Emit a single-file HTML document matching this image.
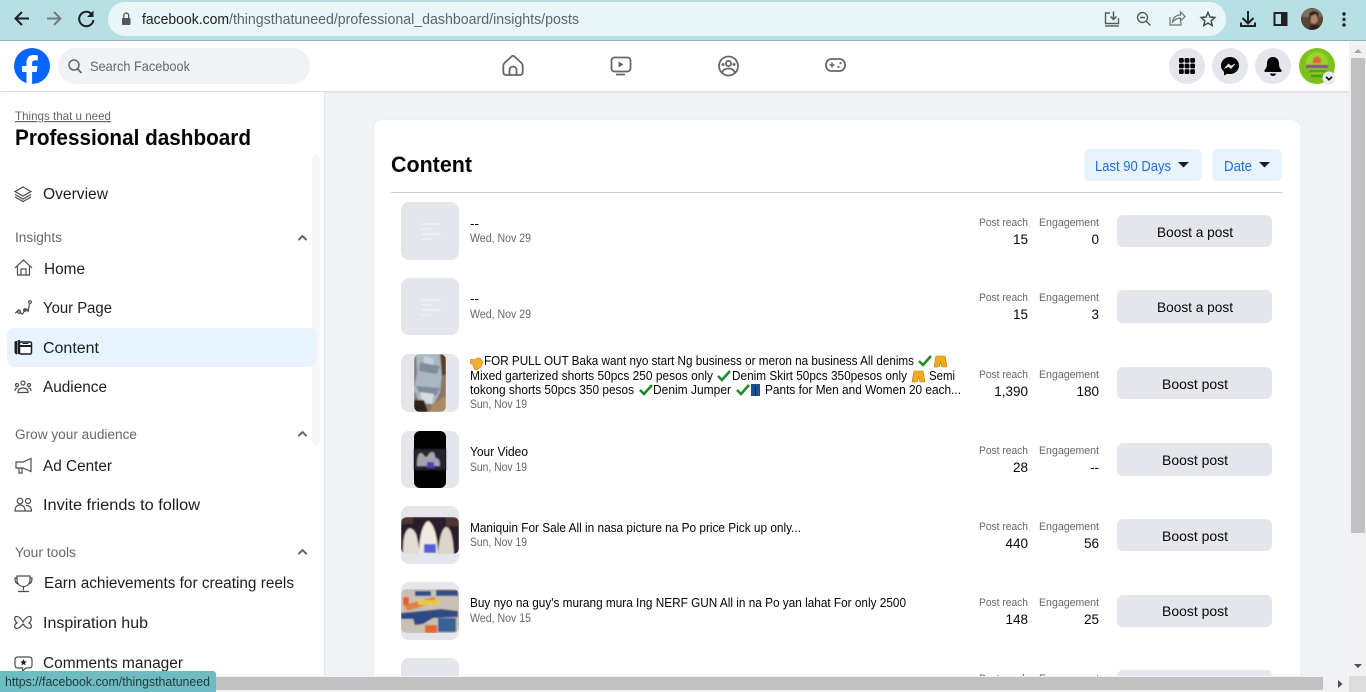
<!DOCTYPE html>
<html lang="en"><head><meta charset="utf-8"><title>Professional dashboard</title>
<style>
html,body{margin:0;padding:0;width:1366px;height:692px;overflow:hidden;background:#f0f2f5;font-family:"Liberation Sans",sans-serif}
#root{position:relative;width:1366px;height:692px;overflow:hidden;background:#f0f2f5}
.b{position:absolute;box-sizing:border-box}
svg{position:absolute;left:0;top:0}
text{font-family:"Liberation Sans",sans-serif}
.nav{font-size:15.5px;fill:#1c1e21}
.sec{font-size:13.5px;fill:#65676b}
.tt{font-size:12.5px;fill:#050505}
.dt{font-size:11.5px;fill:#65676b}
.lb{font-size:11px;fill:#65676b}
.val{font-size:13.5px;fill:#050505}
.btn{font-size:14px;fill:#050505}
.ic{fill:none;stroke:#4b4c4f;stroke-width:1.2}
.ni{fill:none;stroke:#65676b;stroke-width:1.8}
.ch{fill:none;stroke:#606770;stroke-width:2;stroke-linecap:round;stroke-linejoin:round}
</style></head><body><div id="root">
<div class="b" style="left:0;top:0;width:1366px;height:41px;background:#b8e0e4;border-bottom:1px solid #8fb8bc"></div>
<div class="b" style="left:108px;top:2px;width:1118px;height:34px;background:#e9f6f7;border-radius:17px"></div>
<div class="b" style="left:0;top:41px;width:1349px;height:50px;background:#fff;box-shadow:0 1px 2px rgba(0,0,0,.12)"></div>
<div class="b" style="left:58px;top:48px;width:252px;height:36px;background:#f0f2f5;border-radius:18px"></div>
<div class="b" style="left:0;top:92px;width:325px;height:600px;background:#fff;border-right:1px solid #e6e7ea"></div>
<div class="b" style="left:312px;top:155px;width:8px;height:290px;background:#f7f7f8;border-radius:4px"></div>
<div class="b" style="left:7px;top:328px;width:310px;height:39px;background:#e7f3ff;border-radius:8px"></div>
<div class="b" style="left:374px;top:120px;width:926px;height:572px;background:#fff;border-radius:8px;box-shadow:0 0 1px rgba(0,0,0,.12)"></div>
<div class="b" style="left:1084px;top:149px;width:118px;height:32px;background:#e7f3ff;border-radius:6px"></div>
<div class="b" style="left:1212px;top:149px;width:70px;height:32px;background:#e7f3ff;border-radius:6px"></div>
<div class="b" style="left:391px;top:192px;width:891px;height:1px;background:#ced0d4"></div>
<div class="b" style="left:1117px;top:215px;width:155px;height:32px;background:#e4e6eb;border-radius:6px"></div>
<div class="b" style="left:1117px;top:290px;width:155px;height:33px;background:#e4e6eb;border-radius:6px"></div>
<div class="b" style="left:1117px;top:367px;width:155px;height:32px;background:#e4e6eb;border-radius:6px"></div>
<div class="b" style="left:1117px;top:443px;width:155px;height:33px;background:#e4e6eb;border-radius:6px"></div>
<div class="b" style="left:1117px;top:519px;width:155px;height:32px;background:#e4e6eb;border-radius:6px"></div>
<div class="b" style="left:1117px;top:595px;width:155px;height:32px;background:#e4e6eb;border-radius:6px"></div>
<div class="b" style="left:1117px;top:670px;width:155px;height:22px;background:#e4e6eb;border-radius:6px 6px 0 0"></div>
<div class="b" style="left:401px;top:202px;width:58px;height:58px;background:#e4e6eb;border-radius:8px"></div>
<div class="b" style="left:401px;top:278px;width:58px;height:57px;background:#e4e6eb;border-radius:8px"></div>
<div class="b" style="left:401px;top:354px;width:58px;height:58px;background:#e4e6eb;border-radius:8px"></div>
<div class="b" style="left:401px;top:431px;width:58px;height:57px;background:#e4e6eb;border-radius:8px"></div>
<div class="b" style="left:401px;top:506px;width:58px;height:58px;background:#e4e6eb;border-radius:8px"></div>
<div class="b" style="left:401px;top:582px;width:58px;height:58px;background:#e4e6eb;border-radius:8px"></div>
<div class="b" style="left:401px;top:658px;width:58px;height:34px;background:#e4e6eb;border-radius:8px 8px 0 0"></div>

<svg width="1366" height="692" viewBox="0 0 1366 692">
<defs>
<clipPath id="c3"><rect x="414" y="354" width="32" height="58" rx="6"/></clipPath>
<clipPath id="c5"><rect x="401" y="517" width="58" height="37" rx="6"/></clipPath>
<clipPath id="c6"><rect x="401" y="589" width="58" height="44" rx="6"/></clipPath>
<clipPath id="cf"><circle cx="32" cy="66" r="18"/></clipPath>
<clipPath id="cp"><circle cx="1312" cy="19" r="11"/></clipPath>
<clipPath id="clipRow"><rect x="970" y="660" width="140" height="16"/></clipPath>
<filter id="bl1"><feGaussianBlur stdDeviation="0.7"/></filter>
<g id="bl"><path d="M421 0h20M421 5h10M421 10h20M421 15h10" stroke="#f2f3f5" stroke-width="1.2" fill="none"/></g>
<g id="chk"><path d="M1 6l4 4 8-9" fill="none" stroke="#1f8a2b" stroke-width="2.6"/></g>
<g id="sh"><path d="M2 1h9l2 11H8L6.500 7 5 12H0z" fill="#f0ac18" stroke="#b47a0c" stroke-width=".6"/></g>
</defs>

<!-- chrome toolbar -->
<path d="M29 18.500H16M22 12l-6.500 6.500L22 25" fill="none" stroke="#202124" stroke-width="2"/>
<path d="M47 18.500h13M54 12l6.500 6.500L54 25" fill="none" stroke="#757c7e" stroke-width="2"/>
<path d="M92 14.500A7.200 7.200 0 1 0 93.500 20" fill="none" stroke="#202124" stroke-width="2"/><path d="M93.500 10.500v6.500H87z" fill="#202124"/>
<rect x="122" y="18" width="8.500" height="7" rx="1" fill="#55595c"/><path d="M123.800 18v-2.500a2.450 2.450 0 0 1 4.900 0V18" fill="none" stroke="#55595c" stroke-width="1.300"/>
<text x="142" y="24" font-size="14.500" fill="#202124" textLength="87" lengthAdjust="spacingAndGlyphs">facebook.com</text>
<text x="229" y="24" font-size="14.500" fill="#5b6567" textLength="350" lengthAdjust="spacingAndGlyphs">/thingsthatuneed/professional_dashboard/insights/posts</text>
<path d="M1110 13h-4.500v10.500h13V18" fill="none" stroke="#55595c" stroke-width="1.400"/><path d="M1105 26h14" stroke="#55595c" stroke-width="1.400"/><path d="M1113.500 11.500v8M1110.500 16.500l3 3 3-3" fill="none" stroke="#55595c" stroke-width="1.500"/>
<circle cx="1142.500" cy="17.500" r="5" fill="none" stroke="#55595c" stroke-width="1.400"/><path d="M1146 21l4.500 4.500M1140 17.500h5" stroke="#55595c" stroke-width="1.400"/>
<path d="M1170 17v8h11v-3M1172.500 22c.5-4 3.500-7 8-7v-3l4.500 4.500-4.500 4.500v-3c-3 0-5.500 1.500-8 4z" fill="none" stroke="#6b7173" stroke-width="1.200"/>
<path d="M1208 12.500l2 4.500 4.800.5-3.600 3.200 1 4.800-4.200-2.500-4.200 2.500 1-4.800-3.600-3.200 4.800-.5z" fill="none" stroke="#45494b" stroke-width="1.500"/>
<path d="M1248 11v12M1242.500 18l5.500 5.500 5.500-5.500" fill="none" stroke="#202124" stroke-width="2"/><path d="M1241 22.500v3.500h14v-3.500" fill="none" stroke="#202124" stroke-width="2"/>
<rect x="1274.500" y="13" width="12" height="12" fill="none" stroke="#202124" stroke-width="2"/><rect x="1281" y="12" width="6.500" height="14" fill="#202124"/>
<circle cx="1312" cy="19" r="11" fill="#5a4436"/><g clip-path="url(#cp)" filter="url(#bl1)"><path d="M1302 9h20v8h-20z" fill="#7c7360"/><ellipse cx="1314" cy="19" rx="4" ry="5" fill="#b7846a"/><path d="M1309 30c0-5 3-6 6-6s5 2 5 6z" fill="#2d2320"/><path d="M1309 14c2-4 8-4 10 0l-1 5-2-5-5 2-1 9z" fill="#2c1f1b"/></g>
<circle cx="1344" cy="14" r="1.700" fill="#202124"/><circle cx="1344" cy="19.500" r="1.700" fill="#202124"/><circle cx="1344" cy="25" r="1.700" fill="#202124"/>

<!-- FB header -->
<circle cx="32" cy="66" r="18" fill="#0866ff"/>
<g clip-path="url(#cf)"><path d="M26.500 84.500V72h-4.500v-6h4.500v-3.500c0-5 3-7.500 7-7.500 1.500 0 3 .2 4.300.4v5h-2.600c-2.400 0-3.100 1.200-3.100 3V66h5.500l-.9 6h-4.600v12.500z" fill="#fff"/></g>
<circle cx="74" cy="65" r="5" fill="none" stroke="#65676b" stroke-width="1.500"/><path d="M77.500 69l4 4" stroke="#65676b" stroke-width="1.700"/>
<text x="90" y="71" font-size="14" fill="#65676b" textLength="100" lengthAdjust="spacingAndGlyphs">Search Facebook</text>
<path d="M505 62.500l6.500-6c.9-.8 2.100-.8 3 0l6.500 6c1.200 1.100 1.700 2 1.700 3.500v6c0 1.900-1.100 3-3 3h-13.400c-1.900 0-3-1.100-3-3v-6c0-1.500.5-2.400 1.700-3.500z" class="ni"/><path d="M509.500 75v-5a3.500 3.500 0 0 1 7 0v5" class="ni"/>
<rect x="611.500" y="57.500" width="19" height="14" rx="3" class="ni"/><path d="M618.500 61.500l5 3-5 3z" fill="#65676b"/><path d="M616 74.500h9" class="ni"/>
<circle cx="728.500" cy="66" r="9.500" class="ni"/><circle cx="728.500" cy="63.500" r="2.600" class="ni"/><path d="M722 73c.8-3 3-4.500 6.500-4.500s5.700 1.500 6.500 4.500" class="ni"/><circle cx="723" cy="64.500" r="1.500" fill="#65676b"/><circle cx="734" cy="64.500" r="1.500" fill="#65676b"/>
<rect x="826" y="59" width="19" height="12" rx="5.500" class="ni"/><path d="M829.500 65h5M832 62.500v5" stroke="#65676b" stroke-width="1.600"/><circle cx="840.500" cy="63" r="1.100" fill="#65676b"/><circle cx="838.500" cy="67" r="1.100" fill="#65676b"/>
<circle cx="1187" cy="66" r="18" fill="#e4e6eb"/><circle cx="1230" cy="66" r="18" fill="#e4e6eb"/><circle cx="1273" cy="66" r="18" fill="#e4e6eb"/>
<g fill="#050505"><rect x="1179" y="58" width="4.800" height="4.800" rx="1.200"/><rect x="1184.600" y="58" width="4.800" height="4.800" rx="1.200"/><rect x="1190.200" y="58" width="4.800" height="4.800" rx="1.200"/><rect x="1179" y="63.600" width="4.800" height="4.800" rx="1.200"/><rect x="1184.600" y="63.600" width="4.800" height="4.800" rx="1.200"/><rect x="1190.200" y="63.600" width="4.800" height="4.800" rx="1.200"/><rect x="1179" y="69.200" width="4.800" height="4.800" rx="1.200"/><rect x="1184.600" y="69.200" width="4.800" height="4.800" rx="1.200"/><rect x="1190.200" y="69.200" width="4.800" height="4.800" rx="1.200"/></g>
<path d="M1230 57c-5.300 0-9 3.800-9 8.500 0 2.700 1.100 4.800 3 6.300V75.500l3.300-1.800c.8.200 1.700.3 2.700.3 5.300 0 9-3.800 9-8.500S1235.300 57 1230 57z" fill="#050505"/><path d="M1224.500 68.500l4-4.500 2.500 2.200 3.800-2.200-3.800 4.500-2.500-2.200z" fill="#e4e6eb" stroke="#e4e6eb" stroke-width=".7"/>
<path d="M1273 57c-3.800 0-6 2.800-6 6.500 0 3.500-1 5-2.300 6.400-.8.900-.2 2.100.9 2.100h14.800c1.100 0 1.700-1.200.9-2.100-1.300-1.400-2.300-2.900-2.300-6.400 0-3.700-2.200-6.500-6-6.500z" fill="#050505"/><path d="M1270 73.500a3 2.500 0 0 0 6 0z" fill="#050505"/>
<circle cx="1317" cy="66" r="18" fill="#7cc21c"/><circle cx="1317" cy="63" r="11" fill="#98d62a" filter="url(#bl1)"/><g filter="url(#bl1)"><path d="M1313 59l4-3 4 3v4h-8z" fill="#e5603a"/><path d="M1306 65h22v3h-22z" fill="#8d3f9c"/><path d="M1309 70h17v2h-17zM1311 75h13v2h-13z" fill="#3f8c1e"/></g>
<circle cx="1329" cy="78" r="6.500" fill="#e9eaed"/><path d="M1326 76.800l3 3 3-3" fill="none" stroke="#050505" stroke-width="1.600"/>

<!-- sidebar -->
<text x="15" y="120" font-size="12" fill="#65676b" text-decoration="underline" textLength="96" lengthAdjust="spacingAndGlyphs">Things that u need</text>
<text x="15" y="145" font-size="22.500" font-weight="700" fill="#050505" textLength="236" lengthAdjust="spacingAndGlyphs">Professional dashboard</text>
<path d="M23 187l8 4.500-8 4.500-8-4.500z" class="ic"/><path d="M15 194.500l8 4.500 8-4.500M15 197l8 4.500 8-4.500" class="ic"/>
<text class="nav" x="43" y="199" textLength="65" lengthAdjust="spacingAndGlyphs">Overview</text>
<text class="sec" x="15" y="242" textLength="47" lengthAdjust="spacingAndGlyphs">Insights</text><path class="ch" d="M299 239.500l3.500-3.500 3.500 3.500"/>
<path d="M15 268l8.500-8 8.500 8M17.500 266v9h12v-9M21 275v-6h5v6" class="ic"/>
<text class="nav" x="44" y="274" textLength="41" lengthAdjust="spacingAndGlyphs">Home</text>
<path d="M15 313c2 0 2-3 4-3s1 4 3 4 2-5 4-5 2 3 2 3l1.500-8" class="ic"/><circle cx="30" cy="302" r="1.300" class="ic"/><circle cx="19" cy="312" r="1.300" class="ic"/><circle cx="25" cy="310" r="1.300" class="ic"/>
<text class="nav" x="43" y="313" textLength="69" lengthAdjust="spacingAndGlyphs">Your Page</text>
<path d="M17 341h-1c-1 0-1.500.5-1.500 1.500v9c0 1.500 1 3 2.500 3z" fill="#1c1e21"/><path d="M20 340h-1c-1 0-1.500.5-1.500 1.500V354h2z" fill="#1c1e21"/><rect x="19.500" y="342" width="12" height="12" rx="1.500" fill="#fff" stroke="#1c1e21" stroke-width="1.500"/><path d="M20 346h11" stroke="#1c1e21" stroke-width="2"/><path d="M22.500 343.500h6" stroke="#1c1e21"/>
<text class="nav" x="43" y="353" textLength="56" lengthAdjust="spacingAndGlyphs">Content</text>
<circle cx="23" cy="383" r="2" class="ic"/><circle cx="17" cy="385" r="1.500" class="ic"/><circle cx="29" cy="385" r="1.500" class="ic"/><path d="M18 392.500c0-3 2-4.500 5-4.500s5 1.500 5 4.500zM15 391c0-2 1-3 2.500-3M31 391c0-2-1-3-2.500-3" class="ic"/>
<text class="nav" x="43" y="392" textLength="64" lengthAdjust="spacingAndGlyphs">Audience</text>
<text class="sec" x="15" y="439" textLength="122" lengthAdjust="spacingAndGlyphs">Grow your audience</text><path class="ch" d="M299 435.500l3.500-3.500 3.500 3.500"/>
<path d="M16 462h7l8-3.500v13L23 468h-7zM19 468v5h3v-5" class="ic"/>
<text class="nav" x="43" y="471" textLength="69" lengthAdjust="spacingAndGlyphs">Ad Center</text>
<circle cx="20" cy="501" r="2.800" class="ic"/><circle cx="28" cy="501" r="2.500" class="ic"/><path d="M15 511c0-4 2-6 5-6s5 2 5 6zM26 505.500c3 0 5.500 1.500 5.500 5.500H25" class="ic"/>
<text class="nav" x="43" y="510" textLength="157" lengthAdjust="spacingAndGlyphs">Invite friends to follow</text>
<text class="sec" x="15" y="557" textLength="61" lengthAdjust="spacingAndGlyphs">Your tools</text><path class="ch" d="M299 553.500l3.500-3.500 3.500 3.500"/>
<path d="M17 576h13v4c0 4-3 6.500-6.500 6.500S17 584 17 580zM17 578h-2c0 4 1 6 4 6M30 578h2c0 4-1 6-4 6M23.500 586.500v4M18 591.500h11" class="ic"/>
<text class="nav" x="44" y="588" textLength="250" lengthAdjust="spacingAndGlyphs">Earn achievements for creating reels</text>
<path d="M23 622c-2-4-5-6-7-5.500s-1.500 4.500 1 6.500c-2.500 1-3 4-1.500 5s4.500 0 7.500-4c3 4 6 5 7.500 4s1-4-1.500-5c2.500-2 3-6 1-6.500S25 618 23 622z" class="ic"/>
<text class="nav" x="43" y="628" textLength="105" lengthAdjust="spacingAndGlyphs">Inspiration hub</text>
<path d="M18 657h11c2 0 3 1 3 3v5c0 2-1 3-3 3h-3l-3.500 3v-3H18c-2 0-3-1-3-3v-5c0-2 1-3 3-3z" class="ic"/><path d="M23.500 659l1 2.300 2.300.2-1.800 1.500.6 2.400-2.100-1.300-2.100 1.300.6-2.400-1.800-1.500 2.300-.2z" fill="#1c1e21"/>
<text class="nav" x="43" y="668" textLength="140" lengthAdjust="spacingAndGlyphs">Comments manager</text>

<!-- content header -->
<text x="391" y="172" font-size="22" font-weight="700" fill="#050505" textLength="81" lengthAdjust="spacingAndGlyphs">Content</text>
<text x="1095" y="171" font-size="14.500" fill="#216fdb" textLength="76" lengthAdjust="spacingAndGlyphs">Last 90 Days</text>
<path d="M1178 162h11l-5.500 5.500z" fill="#1c1e21"/>
<text x="1224" y="171" font-size="14.500" fill="#216fdb" textLength="28" lengthAdjust="spacingAndGlyphs">Date</text>
<path d="M1259 162h11l-5.500 5.500z" fill="#1c1e21"/>

<!-- blank thumbs -->
<use href="#bl" y="224"/><use href="#bl" y="300"/>

<!-- thumb row 3 -->
<g clip-path="url(#c3)"><g filter="url(#bl1)"><rect x="414" y="354" width="32" height="58" fill="#8b7563"/><path d="M416 354h24l2 20-2 18-6 12h-14l-6-14 3-18z" fill="#a9b7c2"/><path d="M420 362l20 4-3 8-18-3zM416 386l24 2-4 8-16-2z" fill="#7d8d9c"/><path d="M420 392l14 2-2 10-10-2z" fill="#d5dde0"/><path d="M424 356l10 3-1 6-9-2z" fill="#c4d0da"/><path d="M440 354h6v20l-4 2z" fill="#5b3d24"/><path d="M414 400h10l4 12h-14z" fill="#2d2019"/><path d="M432 404l14-8v16h-16z" fill="#a98a62"/></g></g>
<!-- thumb row 4 -->
<rect x="414" y="431" width="32" height="57" rx="6" fill="#000"/><g filter="url(#bl1)"><rect x="414" y="449" width="32" height="21" fill="#27222f"/><path d="M417 466c0-8 1-13 4-13 2 0 3 4 5 4s3-5 6-5 3 4 3 5 3 1 4 3 1 6 1 6z" fill="#a5a3ab"/><path d="M427 462h7v6h-7z" fill="#4443b8"/></g>
<!-- thumb row 5 -->
<g clip-path="url(#c5)"><g filter="url(#bl1)"><rect x="401" y="517" width="58" height="37" fill="#2c1e2a"/><path d="M403 555c0-14 1-22 5-26 3-2 6 1 8 5 2 6 4 21 4 21z" fill="#e2dcd2"/><path d="M419 555c0-16 3-31 9-34 6 2 10 18 10 34z" fill="#efe9e0"/><path d="M438 555c1-16 4-27 8-28 4 0 7 8 8 28z" fill="#dbd5cb"/><path d="M424 544h12v9h-12z" fill="#5360d8"/><path d="M401 517h12v7h-12zM446 517h13v9h-13z" fill="#4f3630"/></g></g>
<!-- thumb row 6 -->
<g clip-path="url(#c6)"><g filter="url(#bl1)"><rect x="401" y="589" width="58" height="44" fill="#c9bfb4"/><path d="M415 591h16v5h-16zM436 590h22v6h-22z" fill="#2f4f86"/><path d="M404 605l30-8 3 5-30 9z" fill="#e2813b"/><path d="M418 600h22v5h-22z" fill="#e9c743"/><path d="M401 613l20-2 20-2 17 2v6l-25 1-10 6-8 1-2-6h-12z" fill="#2f4a86"/><path d="M438 618h18v14h-18z" fill="#35649a"/><path d="M425 625h12v8h-12z" fill="#e36a2c"/><path d="M403 597h6v8h-6z" fill="#e6602a"/></g></g>

<!-- rows -->
<text class="tt" x="470" y="228" textLength="9" lengthAdjust="spacingAndGlyphs">--</text><text class="dt" x="470" y="242" textLength="61" lengthAdjust="spacingAndGlyphs">Wed, Nov 29</text>
<text class="lb" x="979" y="226" textLength="49" lengthAdjust="spacingAndGlyphs">Post reach</text><text class="lb" x="1039" y="226" textLength="60" lengthAdjust="spacingAndGlyphs">Engagement</text>
<text class="val" x="1028" y="244" text-anchor="end">15</text><text class="val" x="1099" y="244" text-anchor="end">0</text>
<text class="btn" x="1157" y="237" textLength="76" lengthAdjust="spacingAndGlyphs">Boost a post</text>

<text class="tt" x="470" y="303" textLength="9" lengthAdjust="spacingAndGlyphs">--</text><text class="dt" x="470" y="318" textLength="61" lengthAdjust="spacingAndGlyphs">Wed, Nov 29</text>
<text class="lb" x="979" y="301" textLength="49" lengthAdjust="spacingAndGlyphs">Post reach</text><text class="lb" x="1039" y="301" textLength="60" lengthAdjust="spacingAndGlyphs">Engagement</text>
<text class="val" x="1028" y="319" text-anchor="end">15</text><text class="val" x="1099" y="319" text-anchor="end">3</text>
<text class="btn" x="1157" y="312" textLength="76" lengthAdjust="spacingAndGlyphs">Boost a post</text>

<path d="M471 359l3 1 3-2h3l3 4-2 5-4 3-3-1-1-4-3-2z" fill="#f2ae2e" stroke="#a87412" stroke-width=".5"/>
<text class="tt" x="484" y="365" textLength="430" lengthAdjust="spacingAndGlyphs">FOR PULL OUT Baka want nyo start Ng business or meron na business All denims</text>
<use href="#chk" x="918" y="355"/><use href="#sh" x="934" y="355"/>
<text class="tt" x="470" y="380" textLength="243" lengthAdjust="spacingAndGlyphs">Mixed garterized shorts 50pcs 250 pesos only</text>
<use href="#chk" x="717" y="370"/>
<text class="tt" x="732" y="380" textLength="175" lengthAdjust="spacingAndGlyphs">Denim Skirt 50pcs 350pesos only</text>
<use href="#sh" x="912" y="370"/>
<text class="tt" x="929" y="380" textLength="26" lengthAdjust="spacingAndGlyphs">Semi</text>
<text class="tt" x="470" y="394" textLength="164" lengthAdjust="spacingAndGlyphs">tokong shorts 50pcs 350 pesos</text>
<use href="#chk" x="639" y="384"/>
<text class="tt" x="653" y="394" textLength="78" lengthAdjust="spacingAndGlyphs">Denim Jumper</text>
<use href="#chk" x="736" y="384"/>
<rect x="751" y="384" width="9" height="12" fill="#1b4f93"/><path d="M755.500 386v10" stroke="#0d2444"/>
<text class="tt" x="765" y="394" textLength="196" lengthAdjust="spacingAndGlyphs">Pants for Men and Women 20 each...</text>
<text class="dt" x="470" y="408" textLength="57" lengthAdjust="spacingAndGlyphs">Sun, Nov 19</text>
<text class="lb" x="979" y="378" textLength="49" lengthAdjust="spacingAndGlyphs">Post reach</text><text class="lb" x="1039" y="378" textLength="60" lengthAdjust="spacingAndGlyphs">Engagement</text>
<text class="val" x="1028" y="396" text-anchor="end">1,390</text><text class="val" x="1099" y="396" text-anchor="end">180</text>
<text class="btn" x="1162" y="389" textLength="66" lengthAdjust="spacingAndGlyphs">Boost post</text>

<text class="tt" x="470" y="456" textLength="58" lengthAdjust="spacingAndGlyphs">Your Video</text><text class="dt" x="470" y="471" textLength="57" lengthAdjust="spacingAndGlyphs">Sun, Nov 19</text>
<text class="lb" x="979" y="454" textLength="49" lengthAdjust="spacingAndGlyphs">Post reach</text><text class="lb" x="1039" y="454" textLength="60" lengthAdjust="spacingAndGlyphs">Engagement</text>
<text class="val" x="1028" y="472" text-anchor="end">28</text><text class="val" x="1099" y="472" text-anchor="end">--</text>
<text class="btn" x="1162" y="465" textLength="66" lengthAdjust="spacingAndGlyphs">Boost post</text>

<text class="tt" x="470" y="532" textLength="331" lengthAdjust="spacingAndGlyphs">Maniquin For Sale All in nasa picture na Po price Pick up only...</text><text class="dt" x="470" y="546" textLength="57" lengthAdjust="spacingAndGlyphs">Sun, Nov 19</text>
<text class="lb" x="979" y="530" textLength="49" lengthAdjust="spacingAndGlyphs">Post reach</text><text class="lb" x="1039" y="530" textLength="60" lengthAdjust="spacingAndGlyphs">Engagement</text>
<text class="val" x="1028" y="548" text-anchor="end">440</text><text class="val" x="1099" y="548" text-anchor="end">56</text>
<text class="btn" x="1162" y="541" textLength="66" lengthAdjust="spacingAndGlyphs">Boost post</text>

<text class="tt" x="470" y="607" textLength="436" lengthAdjust="spacingAndGlyphs">Buy nyo na guy's murang mura Ing NERF GUN All in na Po yan lahat For only 2500</text><text class="dt" x="470" y="622" textLength="61" lengthAdjust="spacingAndGlyphs">Wed, Nov 15</text>
<text class="lb" x="979" y="606" textLength="49" lengthAdjust="spacingAndGlyphs">Post reach</text><text class="lb" x="1039" y="606" textLength="60" lengthAdjust="spacingAndGlyphs">Engagement</text>
<text class="val" x="1028" y="624" text-anchor="end">148</text><text class="val" x="1099" y="624" text-anchor="end">25</text>
<text class="btn" x="1162" y="616" textLength="66" lengthAdjust="spacingAndGlyphs">Boost post</text>

<g clip-path="url(#clipRow)"><text class="lb" x="979" y="682" textLength="49" lengthAdjust="spacingAndGlyphs">Post reach</text><text class="lb" x="1039" y="682" textLength="60" lengthAdjust="spacingAndGlyphs">Engagement</text></g>
</svg>

<!-- scrollbars -->
<div class="b" style="left:1349px;top:41px;width:17px;height:635px;background:#f1f1f1"></div>
<div class="b" style="left:1351px;top:58px;width:14px;height:475px;background:#c1c1c1"></div>
<div class="b" style="left:0;top:676px;width:1366px;height:16px;background:#f1f1f1"></div>
<div class="b" style="left:0;top:677px;width:1323px;height:13px;background:#c1c1c1"></div>
<div class="b" style="left:1349px;top:676px;width:17px;height:16px;background:#dcdcdc"></div>
<div class="b" style="left:0;top:671px;width:216px;height:21px;background:#6dbcc2;border-top-right-radius:3px"></div>
<svg width="1366" height="692" viewBox="0 0 1366 692">
<path d="M1354 53l4-4 4 4z" fill="#a3a3a3"/>
<path d="M1354 664h8l-4 4z" fill="#505050"/>
<path d="M1338 680l4.500 4-4.500 4z" fill="#505050"/>
<text x="5" y="686" font-size="12.500" fill="#263a3d" textLength="205" lengthAdjust="spacingAndGlyphs">https://facebook.com/thingsthatuneed</text>
</svg>
</div></body></html>
